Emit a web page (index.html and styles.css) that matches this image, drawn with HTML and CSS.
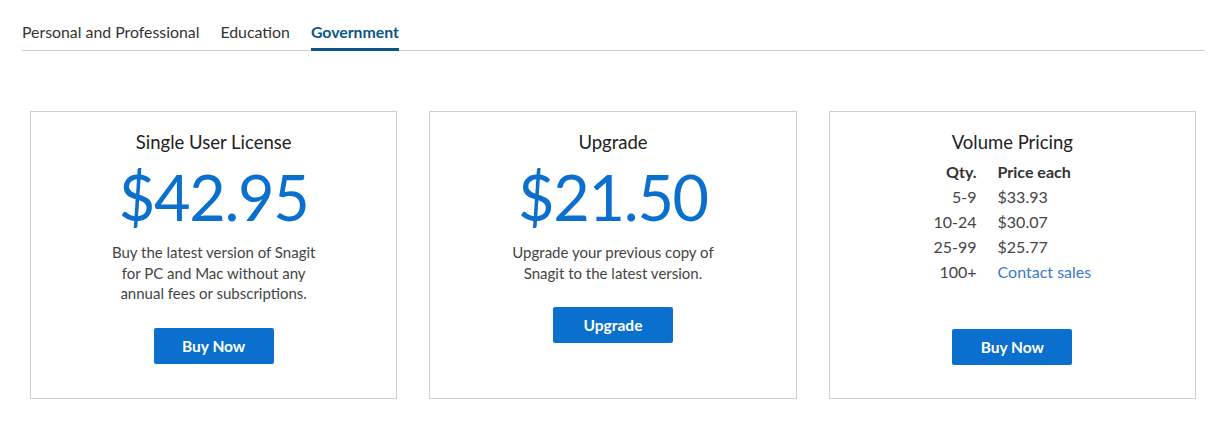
FILE: index.html
```html
<!DOCTYPE html>
<html lang="en">
<head>
<meta charset="utf-8">
<title>Snagit Pricing</title>
<link rel="stylesheet" href="styles.css">
</head>
<body>
<nav class="tabs">
  <a class="tab">Personal and Professional</a>
  <a class="tab">Education</a>
  <a class="tab active">Government</a>
</nav>
<main class="cards">
  <section class="card">
    <h2 class="card-title">Single User License</h2>
    <div class="price">$42.95</div>
    <p class="desc">Buy the latest version of Snagit<br>for PC and Mac without any<br>annual fees or subscriptions.</p>
    <a class="btn">Buy Now</a>
  </section>
  <section class="card">
    <h2 class="card-title">Upgrade</h2>
    <div class="price">$21.50</div>
    <p class="desc">Upgrade your previous copy of<br>Snagit to the latest version.</p>
    <a class="btn">Upgrade</a>
  </section>
  <section class="card">
    <h2 class="card-title">Volume Pricing</h2>
    <table class="volume">
      <tr><th class="qty">Qty.</th><th class="each">Price each</th></tr>
      <tr><td class="qty">5-9</td><td class="each">$33.93</td></tr>
      <tr><td class="qty">10-24</td><td class="each">$30.07</td></tr>
      <tr><td class="qty">25-99</td><td class="each">$25.77</td></tr>
      <tr><td class="qty">100+</td><td class="each"><a class="link">Contact sales</a></td></tr>
    </table>
    <a class="btn btn-volume">Buy Now</a>
  </section>
</main>
</body>
</html>
```
FILE: styles.css
```css
* { box-sizing: border-box; }
body {
  margin: 0;
  background: #fff;
  font-family: Lato, "Open Sans", sans-serif;
  color: #333;
}
.tabs {
  display: flex;
  gap: 21px;
  margin: 0 23px 0 22px;
  padding-top: 22px;
  border-bottom: 1px solid #cfcfcf;
}
.tab {
  font-size: 15.85px;
  line-height: 20px;
  padding-bottom: 6px;
  color: #333;
  border-bottom: 3px solid transparent;
  margin-bottom: -1px;
}
.tab.active {
  color: #0b5689;
  font-weight: 700;
  border-bottom-color: #0b5689;
}
.cards {
  display: grid;
  grid-template-columns: repeat(3, 1fr);
  gap: 32px;
  margin: 60px 32px 0 30px;
}
.card {
  border: 1px solid #cfcfcf;
  height: 288px;
  display: flex;
  flex-direction: column;
  align-items: center;
  padding-top: 18px;
  text-align: center;
}
.card-title {
  margin: 0;
  font-size: 18.5px;
  line-height: 24px;
  font-weight: 400;
  color: #222;
}
.price {
  font-size: 63px;
  line-height: 70px;
  letter-spacing: -1.3px;
  margin-top: 8px;
  color: #0b6fce;
  font-weight: 400;
}
.desc {
  margin: 10px 0 0;
  font-size: 15px;
  line-height: 20.5px;
  color: #444;
}
.btn {
  margin-top: 24px;
  width: 120px;
  height: 36px;
  display: flex;
  align-items: center;
  justify-content: center;
  background: #0b6fce;
  color: #fff;
  font-weight: 700;
  font-size: 15.5px;
  border-radius: 2px;
}
.btn-volume { margin-top: 45px; }
.volume {
  margin-top: 5px;
  border-collapse: collapse;
  font-size: 16px;
  color: #444;
}
.volume th, .volume td {
  padding: 0;
  line-height: 25px;
  font-weight: 400;
}
.volume th { font-weight: 700; color: #333; }
.volume .qty { text-align: right; padding-right: 21px; }
.volume .each { text-align: left; }
.link { color: #3b78c4; }
```
